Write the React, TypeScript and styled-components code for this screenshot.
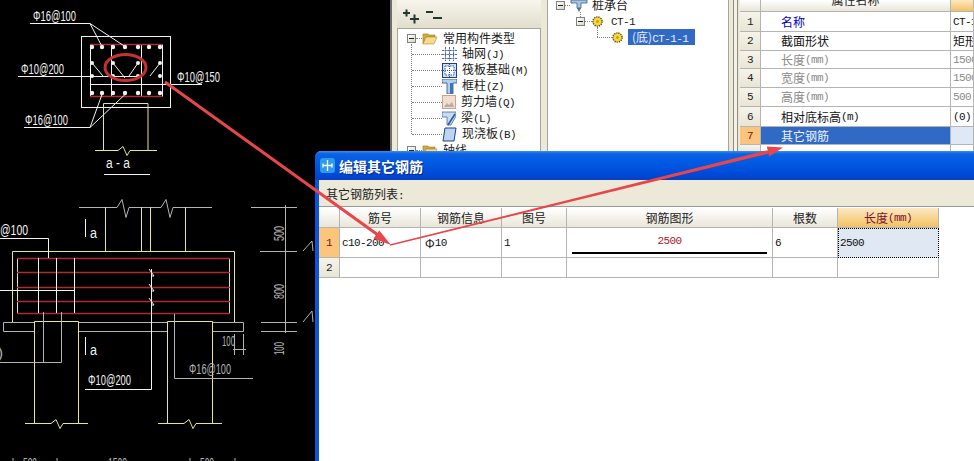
import React from "react";
import styled, { createGlobalStyle } from "styled-components";

const Global = createGlobalStyle`
  html, body { margin: 0; padding: 0; background: #000; }
  body { width: 974px; height: 461px; overflow: hidden; font: 12px/16px "Noto Sans CJK SC", "Liberation Sans", sans-serif; }
`;

const Stage = styled.div`
  position: relative;
  width: 974px;
  height: 461px;
  background: #000;
  overflow: hidden;
`;

const Canvas = styled.svg`
  position: absolute;
  left: 0;
  top: 0;
`;

const CadLabel = styled.text<{ $c?: string }>`
  font-family: "Liberation Sans", sans-serif;
  font-size: 14px;
  fill: ${(p) => p.$c ?? "#f2f2f2"};
`;

const Lat = styled.span`
  font-family: "Liberation Mono", monospace;
  font-size: 11px;
  letter-spacing: -0.6px;
`;

/* back window */
const BackWindow = styled.div`
  position: absolute;
  left: 390px;
  top: 0;
  right: 0;
  height: 152px;
  box-sizing: border-box;
  border-left: 2px solid #6f6f6f;
  padding-left: 5px;
  display: flex;
  background: #ece9d8;
  overflow: hidden;
`;

const LeftPane = styled.div`
  width: 144px;
  margin-right: 6px;
  display: flex;
  flex-direction: column;
  flex: none;
`;

const ToolStrip = styled.div`
  height: 28px;
  flex: none;
  display: flex;
  align-items: flex-start;
  padding: 8px 0 0 6px;
  box-sizing: border-box;
  background: linear-gradient(#f7f5ec, #e2dece);
`;

const TreeBox = styled.div<{ $top: number; $left: number }>`
  flex: 1;
  position: relative;
  background: #fff;
  border: 1px solid #a8a595;
  padding: ${(p) => p.$top}px 0 0 ${(p) => p.$left}px;
  overflow: hidden;
`;

const RightPane = styled(TreeBox)`
  flex: none;
  width: 182px;
  box-sizing: border-box;
  border-top: none;
`;

const Splitter = styled.div`
  flex: none;
  width: 11px;
  box-sizing: border-box;
  margin-left: 0;
  padding: 0 2px 0 4px;
  &::before {
    content: "";
    display: block;
    height: 100%;
    box-sizing: border-box;
    border-left: 1px solid #8f8d80;
    border-right: 1px solid #8f8d80;
    background: #f4f2e8;
  }
`;

const TreeRow = styled.div<{ $indent: number; $shift?: number }>`
  height: 16px;
  display: flex;
  align-items: center;
  margin-left: ${(p) => p.$indent}px;
  margin-top: ${(p) => p.$shift ?? 0}px;
  color: #1a1a1a;
  white-space: nowrap;
`;

const Guide = styled.i<{ $w: number }>`
  flex: none;
  width: ${(p) => p.$w}px;
  border-top: 1px dotted #808080;
`;

const GuideV = styled.i<{ $x: number; $y: number; $h: number }>`
  position: absolute;
  left: ${(p) => p.$x}px;
  top: ${(p) => p.$y}px;
  height: ${(p) => p.$h}px;
  border-left: 1px dotted #808080;
`;

const Expander = styled.span`
  flex: none;
  width: 9px;
  height: 9px;
  box-sizing: border-box;
  border: 1px solid #808080;
  background: linear-gradient(135deg, #fff, #d8d4c6);
  position: relative;
  &::after {
    content: "";
    position: absolute;
    left: 1px;
    top: 3px;
    width: 5px;
    height: 1px;
    background: #222;
  }
`;

const NodeText = styled.span<{ $gap: number }>`
  margin-left: ${(p) => p.$gap}px;
`;

const Selected = styled.span`
  margin-left: 5px;
  width: 67px;
  height: 16px;
  padding-left: 4px;
  box-sizing: border-box;
  background: #316ac5;
  color: #e8eeff;
`;

/* property grid */
const PropGrid = styled.div`
  flex: 1;
  background: #fff;
  display: flex;
  flex-direction: column;
`;

const Cols = styled.div<{ $cols: string; $h: number }>`
  display: grid;
  grid-template-columns: ${(p) => p.$cols};
  height: ${(p) => p.$h}px;
  flex: none;
`;

const Cell = styled.div<{ $color?: string; $bg?: string; $pad?: number; $center?: boolean }>`
  box-sizing: border-box;
  border-right: 1px solid #b4b4b4;
  border-bottom: 1px solid #b4b4b4;
  background: ${(p) => p.$bg ?? "#fff"};
  color: ${(p) => p.$color ?? "#111"};
  padding-left: ${(p) => p.$pad ?? 2}px;
  text-align: ${(p) => (p.$center ? "center" : "left")};
  display: flex;
  align-items: center;
  justify-content: ${(p) => (p.$center ? "center" : "flex-start")};
  overflow: hidden;
  white-space: nowrap;
`;

const RowHead = styled(Cell)<{ $active?: boolean }>`
  padding: 0;
  justify-content: center;
  background: ${(p) => (p.$active ? "#fbc67c" : "linear-gradient(#f6f4ea, #e8e5d6)")};
  color: ${(p) => (p.$active ? "#7a1020" : "#222")};
`;

const HeadCell = styled(Cell)<{ $active?: boolean }>`
  padding: 0;
  justify-content: center;
  background: ${(p) => (p.$active ? "linear-gradient(#fce9c2, #f3c163)" : "linear-gradient(#fff, #e9e6d8)")};
  color: ${(p) => (p.$active ? "#7a1030" : "#222")};
`;

const ClippedHead = styled(HeadCell)`
  align-items: flex-start;
  line-height: 0;
`;

/* dialog */
const Dialog = styled.div`
  position: absolute;
  left: 315px;
  top: 151px;
  right: 0;
  bottom: 0;
  display: flex;
  flex-direction: column;
  background: #fff;
  border-left: 4px solid #0a55e0;
  border-top-left-radius: 6px;
`;

const TitleBar = styled.div`
  height: 29px;
  margin-left: -4px;
  padding-left: 5px;
  flex: none;
  display: flex;
  align-items: center;
  gap: 4px;
  border-top-left-radius: 6px;
  background: linear-gradient(#3a8ff2 0, #0a62e4 10%, #0158e2 45%, #0047d6 85%, #0a3fc0 100%);
`;

const TitleText = styled.span`
  color: #fff;
  font-size: 14px;
  font-weight: 700;
  text-shadow: 1px 1px 1px #0a2a80;
`;

const ListLabel = styled.div`
  height: 27px;
  flex: none;
  box-sizing: border-box;
  padding: 6px 0 0 7px;
  background: #ece9d8;
  border-bottom: 1px solid #9a9a9a;
  color: #222;
`;

const Table = styled.div`
  width: 620px;
  margin-top: 1px;
  display: flex;
  flex-direction: column;
`;

const DrawCell = styled(Cell)`
  flex-direction: column;
  align-items: center;
  justify-content: flex-start;
  color: #b01525;
  padding: 5px 5px 0;
`;

const BendLine = styled.div`
  width: 100%;
  height: 2px;
  margin-top: 3px;
  background: #000;
`;

const ActiveCell = styled(Cell)`
  background: #e0e8f4;
  padding-left: 1px;
  border: 1px dotted #000;
`;

const Overlay = styled(Canvas)`
  pointer-events: none;
`;

const Folder = () => (
  <svg width="16" height="14" viewBox="0 0 16 14">
    <path d="M1 3h5l1 1h6v2H4L1 13z" fill="#d9a93c" stroke="#9a7a30" strokeWidth=".6" />
    <path d="M1 13l3-7h11l-3 7z" fill="#f6dc85" stroke="#a58a3a" strokeWidth=".6" />
  </svg>
);
const IconAxis = () => (
  <svg width="15" height="15" viewBox="0 0 15 15" fill="none" stroke="#4a66b0">
    <path d="M3.500 0v14M7.500 0v14M11.500 0v14M0 3.500h15M0 7.500h15M0 11.500h15" strokeDasharray="2 .6" />
  </svg>
);
const IconRaft = () => (
  <svg width="15" height="15" viewBox="0 0 15 15">
    <rect x=".5" y=".5" width="14" height="14" fill="#d6e2f2" stroke="#1c3f8a" />
    <rect x="3" y="3" width="9" height="9" fill="#fff" stroke="#2a5cb0" strokeDasharray="1.5 1" />
    <path d="M7.500 1v13M1 7.500h13" stroke="#2a5cb0" strokeDasharray="1 1" />
  </svg>
);
const IconColumn = () => (
  <svg width="15" height="15" viewBox="0 0 15 15">
    <path d="M0 0h15v4H11v11H5V4H0z" fill="#b8cfe8" stroke="#24508f" strokeWidth=".8" />
    <path d="M8 4h3v11H8z" fill="#3d74b8" />
  </svg>
);
const IconWall = () => (
  <svg width="14" height="14" viewBox="0 0 14 14">
    <rect x=".5" y=".5" width="13" height="13" fill="#f2ddd0" stroke="#c9a58a" />
    <path d="M2 12l3-4 2 2 3-3 2 5z" fill="#b9aca6" />
  </svg>
);
const IconBeam = () => (
  <svg width="14" height="15" viewBox="0 0 14 15">
    <path d="M0 1h14v4L9 14H5V6H0z" fill="#c8dcef" stroke="#3a6aa8" strokeWidth=".8" />
    <path d="M6 14l7-11" stroke="#2a5a9c" strokeWidth="1.6" />
  </svg>
);
const IconSlab = () => (
  <svg width="15" height="15" viewBox="0 0 15 15">
    <path d="M3 1h11l-2 13H1z" fill="#bcd6f2" stroke="#1c3f8a" />
  </svg>
);
const IconCap = () => (
  <svg width="18" height="16" viewBox="0 0 18 16">
    <path d="M1 3h16v3H11v5H7V6H1z" fill="#a9c3e0" stroke="#3d5f90" strokeWidth=".8" />
    <path d="M7 11h4l-2 4z" fill="#506c94" />
  </svg>
);
const IconGear = () => (
  <svg width="11" height="11" viewBox="0 0 11 11">
    <circle cx="5.500" cy="5.500" r="4.600" fill="#f5d93e" stroke="#55501a" strokeDasharray="1.3 .9" strokeWidth="1.4" />
    <circle cx="5.500" cy="5.500" r="1.400" fill="#c9a21a" />
  </svg>
);
const Expand = () => (
  <svg width="40" height="16" viewBox="0 0 40 16" fill="none" stroke="#1c3a30" strokeWidth="2">
    <path d="M0 5h7M3.500 1.500v7M7 11h9M11.500 6.500v9M23 4h7M30 10h9" />
  </svg>
);
const TitleIcon = () => (
  <svg width="15" height="15" viewBox="0 0 15 15">
    <rect width="15" height="15" rx="3" fill="#2f9be8" />
    <path d="M7.500 2v11M3 7.500h9M3 5.500v4M12 5.500v4" stroke="#fff" strokeWidth="1.3" fill="none" />
  </svg>
);

const Y = "#e6e68a";
const G = "#b4b4b4";
const W = "#f2f2f2";
const R = "#b02a30";

const zig = (x: number, y: number, d = 1) =>
  `L${x - 5} ${y}L${x} ${y - 4 * d}L${x + 4} ${y + 5 * d}L${x + 7} ${y}`;

const Cad = () => (
  <Canvas width="974" height="461" viewBox="0 0 974 461" fill="none">
    {/* section a-a */}
    <rect x="81.500" y="36.500" width="89" height="71" stroke={W} />
    <path d="M90.500 44.500v52M162.500 44.500v52M111.500 44.500v52M141.500 44.500v52M90 84.500h72" stroke={W} />
    <path d="M90 44.500h72M90 96.500h72" stroke={R} strokeWidth="1.400" />
    <path d="M18 76.500h122M162 84.500h40" stroke={W} />
    <path d="M30 23.500h60l12 23M90 23.500l35 23M24 127.500h66l12-33M90 127.500l35-33" stroke={W} />
    <path d="M92 63l11 13M113 63l12 15M138 63l-9 13M160 63l-10 13" stroke={W} />
    <g fill={W}>
      {[92, 102, 113, 125, 138, 149, 160].map((x) => (
        <React.Fragment key={x}>
          <circle cx={x} cy="47" r="2.200" />
          <circle cx={x} cy="93" r="2.200" />
        </React.Fragment>
      ))}
      {[92, 113, 138, 160].map((x) => (
        <React.Fragment key={x}>
          <circle cx={x} cy="63" r="2" />
          <circle cx={x} cy="76" r="2" />
        </React.Fragment>
      ))}
    </g>
    <ellipse cx="125.500" cy="67.500" rx="20.500" ry="13" stroke="#c9302f" strokeWidth="3" />
    <path d={`M103.500 150V103.500H148V150M95 150.500H118${zig(123, 150.5)}H157`} stroke={Y} />
    <path d="M104 174.500h46" stroke={W} />
    <CadLabel x="33" y="21" textLength="43" lengthAdjust="spacingAndGlyphs">Φ16@100</CadLabel>
    <CadLabel x="21" y="74" textLength="43" lengthAdjust="spacingAndGlyphs">Φ10@200</CadLabel>
    <CadLabel x="177" y="82" textLength="43" lengthAdjust="spacingAndGlyphs">Φ10@150</CadLabel>
    <CadLabel x="25" y="125" textLength="43" lengthAdjust="spacingAndGlyphs">Φ16@100</CadLabel>
    <CadLabel x="106" y="168" textLength="24" lengthAdjust="spacingAndGlyphs">a - a</CadLabel>

    {/* elevation */}
    <path d={`M79 207.500H115${zig(122, 207.5, 2)}H160${zig(166, 207.5, 2)}H212`} stroke={G} />
    <path d="M105.500 207v44M141.500 207v44M150.500 207v44M185.500 207v44" stroke={Y} />
    <path d="M12.500 322V251.500H234.500V322" stroke={Y} />
    <path d="M17.500 258v55M229.500 258v55" stroke={Y} />
    <path d="M3.500 322.500h240v9H3.500z" stroke={G} fill="#000" />
    <path d="M17 258.500h213M17 272.500h213M17 287.500h213M17 301.500h213M17 313.500h213" stroke={R} strokeWidth="1.400" />
    <path d="M38.500 258v55M56.500 258v55M74.500 258v55M0 290.500h74M0 238.500h48.500V258" stroke={W} />
    <path d="M151.500 269V389.500H85M149 269l5 7-3 0M149 284l5 7-3 0M149 298l5 7-3 0" stroke={W} />
    <path d="M34.500 423V321.500H78.500V423M167.500 423V321.500H212.500V423" stroke={Y} fill="#000" />
    <path d={`M25 423.500H50${zig(56, 423.5)}H88M158 423.500H183${zig(189, 423.5)}H222`} stroke={Y} />
    <path d="M43.500 312v50M61.500 312v50.500H0M174.500 314v64.500H253" stroke={G} />
    <path d="M85.500 219v18M85.500 337v18" stroke={W} />
    <CadLabel x="0" y="235" textLength="28" lengthAdjust="spacingAndGlyphs">@100</CadLabel>
    <CadLabel x="88" y="385" textLength="43" lengthAdjust="spacingAndGlyphs">Φ10@200</CadLabel>
    <CadLabel $c={G} x="189" y="374" textLength="42" lengthAdjust="spacingAndGlyphs">Φ16@100</CadLabel>
    <CadLabel $c={G} x="-2" y="358" textLength="5" lengthAdjust="spacingAndGlyphs">)</CadLabel>
    <CadLabel x="90" y="238" textLength="7" lengthAdjust="spacingAndGlyphs">a</CadLabel>
    <CadLabel x="90" y="355" textLength="7" lengthAdjust="spacingAndGlyphs">a</CadLabel>

    {/* dimensions */}
    <path d="M285.500 205v128M251 207.500h46M260 251.500h37M261 322.500h36M261 331.500h36M303 251l9-10 1 10M303 322l9-11 1 11" stroke={G} />
    <path d="M234.500 334v21M243.500 334v21M233 349.500h13" stroke={G} />
    <CadLabel $c={G} x="222" y="346" textLength="13" lengthAdjust="spacingAndGlyphs">100</CadLabel>
    <CadLabel $c={G} transform="translate(284 241) rotate(-90)" textLength="15" lengthAdjust="spacingAndGlyphs">500</CadLabel>
    <CadLabel $c={G} transform="translate(284 299) rotate(-90)" textLength="15" lengthAdjust="spacingAndGlyphs">800</CadLabel>
    <CadLabel $c={G} transform="translate(284 355) rotate(-90)" textLength="13" lengthAdjust="spacingAndGlyphs">100</CadLabel>
    <CadLabel $c={G} x="23" y="468" textLength="14" lengthAdjust="spacingAndGlyphs">500</CadLabel>
    <CadLabel $c={G} x="108" y="468" textLength="19" lengthAdjust="spacingAndGlyphs">1500</CadLabel>
    <CadLabel $c={G} x="200" y="468" textLength="14" lengthAdjust="spacingAndGlyphs">500</CadLabel>
    <path d="M13 458v3M57 458v3M190 458v3M235 458v3" stroke={G} />
  </Canvas>
);

const propCols = "21px 190px 1fr";
const tableCols = "21px 81px 81px 65px 206px 65px 101px";

const props: { n: number; h: number; name: React.ReactNode; value: React.ReactNode; color?: string }[] = [
  { n: 1, h: 20, name: "名称", value: <Lat>CT-1</Lat>, color: "#0000c0" },
  { n: 2, h: 19, name: "截面形状", value: "矩形" },
  { n: 3, h: 18, name: <>长度<Lat>(mm)</Lat></>, value: <Lat>1500</Lat>, color: "#8a8a8a" },
  { n: 4, h: 19, name: <>宽度<Lat>(mm)</Lat></>, value: <Lat>1500</Lat>, color: "#8a8a8a" },
  { n: 5, h: 19, name: <>高度<Lat>(mm)</Lat></>, value: <Lat>500</Lat>, color: "#8a8a8a" },
  { n: 6, h: 20, name: <>相对底标高<Lat>(m)</Lat></>, value: <Lat>(0)</Lat> },
];

export default function App() {
  return (
    <Stage>
      <Global />
      <Cad />
      <BackWindow>
        <LeftPane>
          <ToolStrip>
            <Expand />
          </ToolStrip>
          <TreeBox $top={1} $left={9}>
            <GuideV $x={13} $y={15} $h={90} />
            <TreeRow $indent={0}>
              <Expander />
              <Guide $w={6} />
              <Folder />
              <NodeText $gap={5}>常用构件类型</NodeText>
            </TreeRow>
            {[
              [<IconAxis key="a" />, "轴网", "(J)"],
              [<IconRaft key="b" />, "筏板基础", "(M)"],
              [<IconColumn key="c" />, "框柱", "(Z)"],
              [<IconWall key="d" />, "剪力墙", "(Q)"],
              [<IconBeam key="e" />, "梁", "(L)"],
              [<IconSlab key="f" />, "现浇板", "(B)"],
            ].map(([icon, cn, lat], i) => (
              <TreeRow $indent={5} key={i}>
                <Guide $w={30} />
                {icon}
                <NodeText $gap={5}>
                  {cn}
                  <Lat>{lat}</Lat>
                </NodeText>
              </TreeRow>
            ))}
            <TreeRow $indent={0}>
              <Expander />
              <Guide $w={6} />
              <Folder />
              <NodeText $gap={5}>轴线</NodeText>
            </TreeRow>
          </TreeBox>
        </LeftPane>
        <RightPane $top={0} $left={8}>
          <GuideV $x={32} $y={12} $h={5} />
          <GuideV $x={49} $y={27} $h={10} />
          <TreeRow $indent={0} $shift={-3}>
            <Expander />
            <Guide $w={5} />
            <IconCap />
            <NodeText $gap={4}>桩承台</NodeText>
          </TreeRow>
          <TreeRow $indent={20}>
            <Expander />
            <Guide $w={7} />
            <IconGear />
            <NodeText $gap={8}>
              <Lat>CT-1</Lat>
            </NodeText>
          </TreeRow>
          <TreeRow $indent={41}>
            <Guide $w={15} />
            <IconGear />
            <Selected>
              (底)<Lat>CT-1-1</Lat>
            </Selected>
          </TreeRow>
        </RightPane>
        <Splitter />
        <PropGrid>
          <Cols $cols={propCols} $h={12}>
            <HeadCell />
            <ClippedHead>属性名称</ClippedHead>
            <HeadCell $active />
          </Cols>
          {props.map((p) => (
            <Cols $cols={propCols} $h={p.h} key={p.n}>
              <RowHead>
                <Lat>{p.n}</Lat>
              </RowHead>
              <Cell $pad={20} $color={p.color}>
                {p.name}
              </Cell>
              <Cell $color={p.color === "#8a8a8a" ? p.color : undefined}>{p.value}</Cell>
            </Cols>
          ))}
          <Cols $cols={propCols} $h={18}>
            <RowHead $active>
              <Lat>7</Lat>
            </RowHead>
            <Cell $pad={20} $bg="#316ac5" $color="#eef2ff">
              其它钢筋
            </Cell>
            <Cell $bg="#dfe8f5" />
          </Cols>
          <Cols $cols={propCols} $h={8}>
            <RowHead />
            <Cell />
            <Cell />
          </Cols>
        </PropGrid>
      </BackWindow>
      <Dialog>
        <TitleBar>
          <TitleIcon />
          <TitleText>编辑其它钢筋</TitleText>
        </TitleBar>
        <ListLabel>
          其它钢筋列表<Lat>:</Lat>
        </ListLabel>
        <Table>
          <Cols $cols={tableCols} $h={20}>
            <HeadCell />
            <HeadCell>筋号</HeadCell>
            <HeadCell>钢筋信息</HeadCell>
            <HeadCell>图号</HeadCell>
            <HeadCell>钢筋图形</HeadCell>
            <HeadCell>根数</HeadCell>
            <HeadCell $active>
              长度<Lat>(mm)</Lat>
            </HeadCell>
          </Cols>
          <Cols $cols={tableCols} $h={30}>
            <RowHead $active>
              <Lat>1</Lat>
            </RowHead>
            <Cell>
              <Lat>c10-200</Lat>
            </Cell>
            <Cell $pad={4}>
              Φ<Lat>10</Lat>
            </Cell>
            <Cell>
              <Lat>1</Lat>
            </Cell>
            <DrawCell>
              <Lat>2500</Lat>
              <BendLine />
            </DrawCell>
            <Cell>
              <Lat>6</Lat>
            </Cell>
            <ActiveCell>
              <Lat>2500</Lat>
            </ActiveCell>
          </Cols>
          <Cols $cols={tableCols} $h={20}>
            <RowHead>
              <Lat>2</Lat>
            </RowHead>
            <Cell />
            <Cell />
            <Cell />
            <Cell />
            <Cell />
            <Cell />
          </Cols>
        </Table>
      </Dialog>
      <Overlay width="974" height="461" viewBox="0 0 974 461">
        <path d="M165 82L378 235" stroke="#e8464a" strokeWidth="3" fill="none" />
        <polygon points="391,245 373.500,238.600 379.300,230.400" fill="#e8464a" />
        <polygon points="390,244.300 390.200,245.700 768.400,153.800 767.600,150.200" fill="#e8464a" />
        <polygon points="783,147.500 769.200,156.400 766.800,146.600" fill="#e8464a" />
      </Overlay>
    </Stage>
  );
}
